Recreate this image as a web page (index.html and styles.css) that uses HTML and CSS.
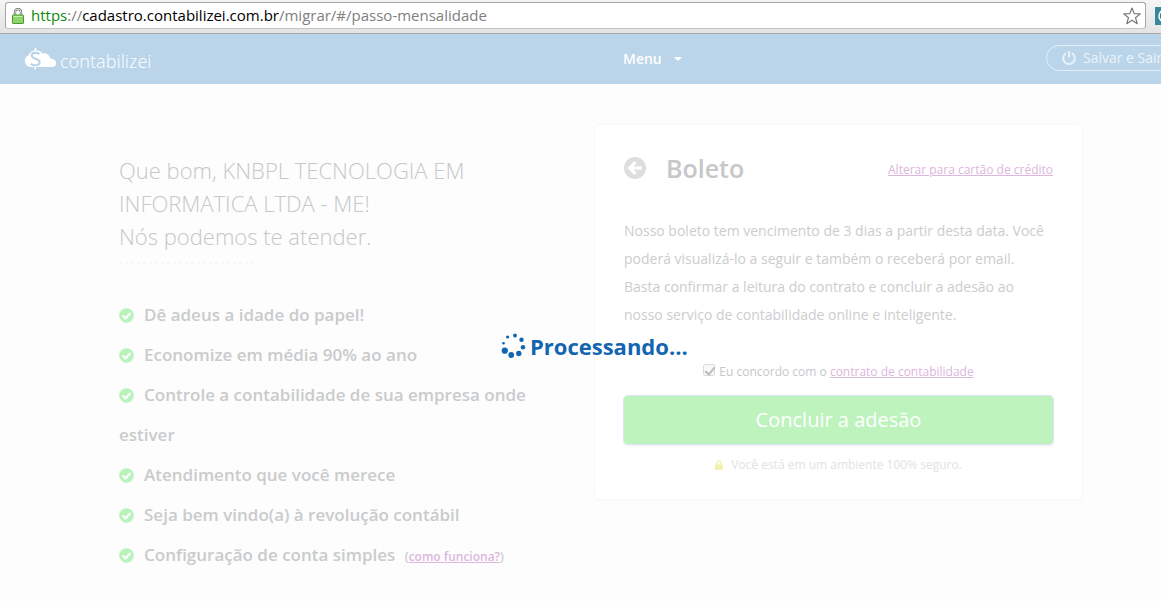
FILE: index.html
```html
<!DOCTYPE html>
<html lang="pt-BR">
<head>
<meta charset="utf-8">
<title>Contabilizei - Mensalidade</title>
<link rel="stylesheet" href="styles.css">
</head>
<body>
<svg class="defs" aria-hidden="true">
  <symbol id="check" viewBox="0 0 15 15"><circle cx="7.5" cy="7.5" r="7.3" fill="#b9f3bb"/><path d="M3.6 7.5l2.8 2.8 5-5" fill="none" stroke="#fdfdfd" stroke-width="2.3"/></symbol>
</svg>
<div class="toolbar">
  <div class="address">
    <svg class="lock" viewBox="0 0 12 16" aria-hidden="true"><path d="M3 8V4a3 3 0 0 1 6 0v4" fill="none" stroke="#777" stroke-width="2.4"/><path d="M3 8V4a3 3 0 0 1 6 0v4" fill="none" stroke="#ddd" stroke-width="1"/><rect x=".5" y="7" width="11" height="8.5" rx=".6" fill="#8ed66b" stroke="#4c9a2c"/><path d="M1.5 8.5h9" stroke="#c4efac"/></svg>
    <span class="url"><span class="secure">https</span>://<span class="host">cadastro.contabilizei.com.br</span>/migrar/#/passo-mensalidade</span>
    <button class="star" aria-label="Favoritos"><svg viewBox="0 0 18 18"><path d="M9 1l2.2 5.6 6 .3-4.7 3.8 1.7 6L9 13.3l-5.2 3.4 1.7-6L.8 6.9l6-.3z" fill="#fff" stroke="#777" stroke-width="1.2" stroke-linejoin="round"/></svg></button>
  </div>
  <button class="extension" aria-label="Extensão"><svg viewBox="0 0 18 18"><circle cx="10" cy="9" r="6" fill="none" stroke="#fff" stroke-width="1.5"/></svg></button>
</div>
<header class="header">
  <a class="brand" href="#">
    <svg viewBox="0 0 34 22" aria-hidden="true"><path d="M6.500 19a6 6 0 0 1-2-11.500A8 8 0 0 1 18.500 5.500q5.500-1.200 8 5 5.500.5 5.500 5 0 3-3.500 3.500z" fill="#fff"/><path d="M15.300 6.200Q14 4.700 11.500 4.700 7.800 4.800 7.800 7.500c0 4 7.800 2.400 7.800 6.500 0 2.500-2 3.300-4.300 3.300-2 0-3.600-.6-4.600-1.600" fill="none" stroke="#bad5ea" stroke-width="2.200"/><path d="M11.500 0v3.500M11.300 18.500v3" stroke="#fff" stroke-width="1.500"/></svg>
    <span>contabilizei</span>
  </a>
  <button class="menu">Menu <svg viewBox="0 0 8 4" aria-hidden="true"><path d="M0 0h8L4 4z" fill="#fff"/></svg></button>
  <div class="exit-slot"><button class="exit"><svg viewBox="0 0 14 14" aria-hidden="true"><path d="M4 2.3a5.800 5.800 0 1 0 6 0M7 0v6.500" fill="none" stroke="#eaf3f9" stroke-width="1.9"/></svg>Salvar e Sair</button></div>
</header>
<main class="content">
  <section class="intro">
    <h1>Que bom, KNBPL TECNOLOGIA EM INFORMATICA LTDA - ME!<br>Nós podemos te atender.</h1>
    <div class="divider"></div>
    <ul class="benefits">
      <li><svg><use href="#check"/></svg>Dê adeus a idade do papel!</li>
      <li><svg><use href="#check"/></svg>Economize em média 90% ao ano</li>
      <li><svg><use href="#check"/></svg>Controle a contabilidade de sua empresa onde estiver</li>
      <li><svg><use href="#check"/></svg>Atendimento que você merece</li>
      <li><svg><use href="#check"/></svg>Seja bem vindo(a) à revolução contábil</li>
      <li><svg><use href="#check"/></svg>Configuração de conta simples <small>(<a href="#">como funciona?</a>)</small></li>
    </ul>
  </section>
  <section class="card">
    <div class="card-head">
      <button class="back" aria-label="Voltar"><svg viewBox="0 0 22 22"><circle cx="11" cy="11" r="11" fill="#dedede"/><path d="M18 11H6M11.5 5.2L5.7 11l5.8 5.8" fill="none" stroke="#fff" stroke-width="3.2"/></svg></button>
      <h2>Boleto</h2>
      <a href="#">Alterar para cartão de crédito</a>
    </div>
    <p class="text">Nosso boleto tem vencimento de 3 dias a partir desta data. Você poderá visualizá-lo a seguir e também o receberá por email. <br>Basta confirmar a leitura do contrato e concluir a adesão ao nosso serviço de contabilidade online e inteligente.</p>
    <div class="agree"><input type="checkbox" id="agree" checked><label for="agree">Eu concordo com o <a href="#">contrato de contabilidade</a></label></div>
    <button class="submit">Concluir a adesão</button>
    <p class="safe"><svg viewBox="0 0 8 10" aria-hidden="true"><path d="M2 5V3a2 2 0 0 1 4 0v2" fill="none" stroke="#f3f1ae" stroke-width="1.4"/><rect y="4.5" width="8" height="5.5" rx=".6" fill="#f3f1ae"/></svg>Você está em um ambiente 100% seguro.</p>
  </section>
</main>
<div class="loading" role="status">
  <svg viewBox="0 0 26 26" aria-hidden="true" fill="#1265b0"><circle cx="15" cy="2.5" r="1.9"/><circle cx="21.5" cy="6.7" r="2.2"/><circle cx="23" cy="14.2" r="2.3"/><circle cx="18.8" cy="20.5" r="2.7"/><circle cx="11.2" cy="22" r="2.9"/><circle cx="4.8" cy="17.7" r="3.1"/><circle cx="3.5" cy="10.2" r="1.3"/><circle cx="7.6" cy="4" r="1.6"/></svg>
  <span>Processando...</span>
</div>
</body>
</html>
```

FILE: styles.css
```css
* { box-sizing: border-box; }
body { margin: 0; background: #fdfdfd; color: #c5c7c9; font: 14px/20px "Open Sans", sans-serif; overflow: hidden; }
h1, h2, p, ul { margin: 0; padding: 0; }
button { font: inherit; color: inherit; border: 0; padding: 0; background: none; }
svg { flex: none; }
a { color: #dcb6dc; }
.defs { display: none; }

.toolbar { display: flex; gap: 9px; height: 34px; padding: 2px 0 4px 5px; overflow: hidden; background: linear-gradient(#f5f5f5, #e3e3e3); border-bottom: 1px solid #a9a9a9; }
.address { flex: 1; display: flex; align-items: center; height: 27px; padding: 0 4px 0 6px; background: #fff; border: 1px solid #a6a6a6; border-bottom-color: #c4c4c4; border-radius: 3px; }
.lock { width: 12px; height: 16px; }
.url { flex: 1; margin-left: 7px; padding-bottom: 1px; font-size: 15px; color: #808080; white-space: nowrap; }
.secure { color: #0b8a0b; }
.host { color: #000; }
.star svg { display: block; width: 18px; height: 18px; }
.extension { width: 6px; height: 18px; margin-top: 5px; background: #37889b; overflow: hidden; }
.extension svg { display: block; width: 18px; height: 18px; }

.header { display: grid; grid-template-columns: 599fr 423fr 115px; align-items: center; height: 50px; padding-left: 24px; background: #bad5ea; color: #fff; overflow: hidden; }
.brand { display: flex; align-items: center; gap: 2px; color: #f8fbfd; text-decoration: none; font: 300 18px/24px "Noto Sans", sans-serif; }
.brand svg { width: 34px; height: 22px; }
.brand span { padding-top: 3px; }
.menu { justify-self: start; display: flex; align-items: center; gap: 12px; font-weight: 600; }
.menu svg { width: 8px; height: 4px; }
.exit-slot { min-width: 0; padding-bottom: 2px; }
.exit { display: flex; align-items: center; gap: 7px; width: 136px; height: 26px; padding-left: 15px; border: 1px solid #e3eff8; border-radius: 13px; color: #eaf3f9; white-space: nowrap; }
.exit svg { width: 14px; height: 14px; }

.content { display: grid; grid-template-columns: 436fr 489fr; gap: 39px; align-items: start; padding: 40px 78px 0 119px; }
.intro { padding-top: 30px; }
h1 { font-size: 22px; line-height: 33px; font-weight: 300; }
.divider { width: 140px; height: 2px; margin: 9px 0 31px; background: repeating-linear-gradient(90deg, #f7f7f7 0 3px, transparent 3px 6px); }
.benefits { list-style: none; font-size: 17px; line-height: 40px; font-weight: 600; color: #c9cbcc; }
.benefits svg { width: 15px; height: 15px; margin-right: 10px; vertical-align: -2px; }
.benefits small { margin-left: 5px; font-size: 12px; }

.card { padding: 28px 29px 24px; background: #fff; border: 1px solid #f8f8f8; border-radius: 6px; box-shadow: 0 1px 3px #f9f9f9; }
.card-head { display: flex; align-items: center; height: 30px; margin-bottom: 34px; }
.back svg { display: block; width: 22px; height: 22px; }
h2 { flex: 1; margin-left: 20px; font-size: 25px; line-height: 30px; font-weight: 600; }
.card-head a { font-size: 12px; padding-top: 3px; }
.text { line-height: 28px; color: #cbcdce; }
.agree { display: flex; justify-content: center; align-items: center; gap: 4px; height: 20px; margin: 33px 0 14px; font-size: 12px; }
.agree input { appearance: none; width: 12px; height: 12px; margin: 0 0 5px; border: 1px solid #dcdcdc; border-radius: 2px; background: #f8f8f8; position: relative; }
.agree input:checked::after { content: ""; position: absolute; left: 3px; top: 0; width: 4px; height: 8px; border: solid #bdbdbd; border-width: 0 2px 2px 0; transform: rotate(40deg); }
.submit { display: block; width: 100%; height: 48px; border-radius: 4px; background: #bef3bd; color: #fff; font-size: 20px; box-shadow: 0 0 0 1px #d8e6fa, 0 2px 3px #eee; }
.safe { display: flex; align-items: center; justify-content: center; gap: 8px; margin-top: 11px; font-size: 12px; color: #e1e2e3; }
.safe svg { width: 8px; height: 10px; }

.loading { position: absolute; left: 500px; top: 331px; display: flex; align-items: center; gap: 4px; color: #1265b0; font-size: 22px; line-height: 30px; font-weight: 700; }
.loading svg { width: 26px; height: 26px; }
```
